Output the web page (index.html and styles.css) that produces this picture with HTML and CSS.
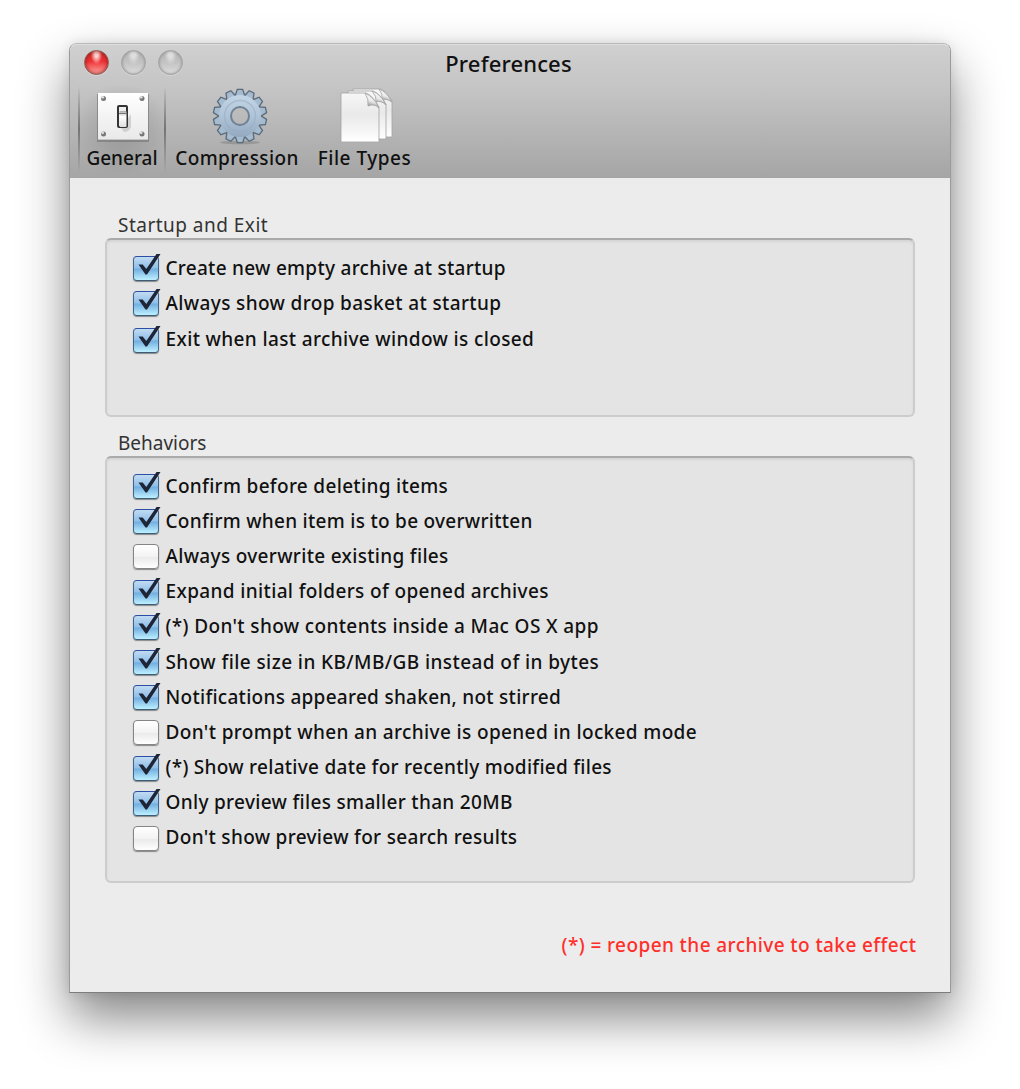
FILE: index.html
```html
<!DOCTYPE html>
<html lang="en">
<head>
<meta charset="utf-8">
<title>Preferences</title>
<link rel="stylesheet" href="styles.css">
</head>
<body>
<main class="window">
  <header class="chrome">
    <div class="titlebar">
      <div class="lights"><i class="light close"></i><i class="light"></i><i class="light"></i></div>
      <h1>Preferences</h1>
    </div>
    <nav class="toolbar">
      <div class="tab general selected">
        <svg width="56" height="54" viewBox="0 0 56 54">
          <defs>
            <linearGradient id="plate" x2="0" y2="1"><stop stop-color="#fff"/><stop offset="1" stop-color="#e9e9e9"/></linearGradient>
            <linearGradient id="lever" x2="0" y2="1"><stop stop-color="#aaa"/><stop offset=".35" stop-color="#fff"/><stop offset="1" stop-color="#ddd"/></linearGradient>
          </defs>
          <rect x="2" y="5" width="52" height="48" fill="#777" opacity=".65"/>
          <rect x="3" y="4" width="50" height="46" fill="url(#plate)"/>
          <path d="M3 50.500H53" stroke="#c5c5c5"/>
          <g fill="#777"><circle cx="8.500" cy="9.500" r="2.500"/><circle cx="47" cy="9.500" r="2.500"/><circle cx="8.500" cy="45" r="2.500"/><circle cx="47" cy="45" r="2.500"/></g>
          <g fill="#ddd"><circle cx="7.700" cy="8.300" r="1.400"/><circle cx="46.200" cy="8.300" r="1.400"/><circle cx="7.700" cy="43.800" r="1.400"/><circle cx="46.200" cy="43.800" r="1.400"/></g>
          <path d="M26 39l10-14v13q-2 5-7 5z" fill="#aaa" opacity=".45"/>
          <rect x="23" y="17" width="9" height="21" rx="1" fill="#eee" stroke="#333" stroke-width="2"/>
          <rect x="24.500" y="22" width="7" height="16" rx="1" fill="url(#lever)"/>
          <path d="M24 24.500H31" stroke="#777"/>
        </svg>
        <span>General</span>
      </div>
      <div class="tab compression">
        <svg width="60" height="58" viewBox="-30 -29 60 58">
          <defs>
            <linearGradient id="steel" gradientUnits="userSpaceOnUse" x1="0" y1="-27" x2="0" y2="27"><stop stop-color="#c8dbea"/><stop offset=".5" stop-color="#b0c4d7"/><stop offset="1" stop-color="#8ba2b8"/></linearGradient>
            <path id="tooth" d="M-4.200-20L-2.200-26H2.200L4.200-20z"/>
            <g id="gear"><circle r="20.500"/>
              <use href="#tooth"/><use href="#tooth" transform="rotate(25.714)"/><use href="#tooth" transform="rotate(51.429)"/><use href="#tooth" transform="rotate(77.143)"/><use href="#tooth" transform="rotate(102.857)"/><use href="#tooth" transform="rotate(128.571)"/><use href="#tooth" transform="rotate(154.286)"/><use href="#tooth" transform="rotate(180)"/><use href="#tooth" transform="rotate(205.714)"/><use href="#tooth" transform="rotate(231.429)"/><use href="#tooth" transform="rotate(257.143)"/><use href="#tooth" transform="rotate(282.857)"/><use href="#tooth" transform="rotate(308.571)"/><use href="#tooth" transform="rotate(334.286)"/>
            </g>
            <mask id="hub"><rect x="-30" y="-30" width="60" height="60" fill="#fff"/><circle r="8.500" fill="#000"/></mask>
          </defs>
          <ellipse cy="26.500" rx="20" ry="1.800" fill="#777" opacity=".45"/>
          <g mask="url(#hub)">
            <use href="#gear" fill="#596a7b" stroke="#596a7b" stroke-width="2.600"/>
            <use href="#gear" fill="#a5bbcf"/>
            <circle r="21" fill="url(#steel)"/>
            <circle r="15.500" fill="none" stroke="#98aec4" stroke-width="1.500" opacity=".6"/>
          </g>
          <circle r="9" fill="none" stroke="#6f8295" stroke-width="2"/>
        </svg>
        <span>Compression</span>
      </div>
      <div class="tab files">
        <svg width="58" height="58" viewBox="0 0 58 58">
          <defs><linearGradient id="paper" x2="0" y2="1"><stop stop-color="#f7f7f7"/><stop offset=".45" stop-color="#e9e9e9"/><stop offset="1" stop-color="#fff"/></linearGradient>
          <linearGradient id="curl" x1=".6" y1="0" x2=".3" y2="1"><stop stop-color="#fff"/><stop offset=".55" stop-color="#e8e8e8"/><stop offset="1" stop-color="#777"/></linearGradient></defs>
          <g fill="url(#paper)" stroke="#a2a2a2" stroke-width=".8">
            <path d="M15 2H42Q47 3 54 14V50H15z"/><path d="M41 2Q45 7 44 13Q49 11 54 15Q49 5 41 2" fill="url(#curl)"/>
            <path d="M10 4H35Q41 6 48 17V52H10z"/><path d="M34 4Q39 9 38 15Q43 13 48 18Q43 7 34 4" fill="url(#curl)"/>
            <path d="M3 6H28Q34 8 41 20V55H3z"/><path d="M27 6Q31 12 30 19Q36 16 41 21Q36 10 27 6" fill="url(#curl)"/>
          </g>
        </svg>
        <span>File Types</span>
      </div>
    </nav>
  </header>
  <section class="content">
    <svg class="defs" width="0" height="0">
      <symbol id="check" viewBox="0 0 28 30"><path d="M5.500 12.500H9.700L13.300 17L23.500 2H27.500L14 22.500H12.500z" fill="#1d2536"/></symbol>
    </svg>
    <h2 class="wide">Startup and Exit</h2>
    <div class="group startup">
      <div class="row"><i class="box on"><svg><use href="#check"/></svg></i><span class="tight">Create new empty archive at startup</span></div>
      <div class="row"><i class="box on"><svg><use href="#check"/></svg></i><span class="loose">Always show drop basket at startup</span></div>
      <div class="row last"><i class="box on"><svg><use href="#check"/></svg></i><span class="loose">Exit when last archive window is closed</span></div>
    </div>
    <h2>Behaviors</h2>
    <div class="group behaviors">
      <div class="row"><i class="box on"><svg><use href="#check"/></svg></i><span>Confirm before deleting items</span></div>
      <div class="row"><i class="box on"><svg><use href="#check"/></svg></i><span class="tight">Confirm when item is to be overwritten</span></div>
      <div class="row"><i class="box"></i><span>Always overwrite existing files</span></div>
      <div class="row"><i class="box on"><svg><use href="#check"/></svg></i><span class="loose">Expand initial folders of opened archives</span></div>
      <div class="row"><i class="box on"><svg><use href="#check"/></svg></i><span class="loose">(*) Don't show contents inside a Mac OS X app</span></div>
      <div class="row"><i class="box on"><svg><use href="#check"/></svg></i><span class="looser">Show file size in KB/MB/GB instead of in bytes</span></div>
      <div class="row"><i class="box on"><svg><use href="#check"/></svg></i><span class="tight">Notifications appeared shaken, not stirred</span></div>
      <div class="row"><i class="box"></i><span class="loose">Don't prompt when an archive is opened in locked mode</span></div>
      <div class="row"><i class="box on"><svg><use href="#check"/></svg></i><span class="tight">(*) Show relative date for recently modified files</span></div>
      <div class="row"><i class="box on"><svg><use href="#check"/></svg></i><span>Only preview files smaller than 20MB</span></div>
      <div class="row"><i class="box"></i><span>Don't show preview for search results</span></div>
    </div>
    <p class="note">(*) = reopen the archive to take effect</p>
  </section>
</main>
</body>
</html>
```
FILE: styles.css
```css
* { box-sizing: border-box; }
html { background: #fff; }
body {
  margin: 0;
  height: 1089px;
  padding: 43px 69px 0;
  overflow: hidden;
  color: #111;
  font: 500 19px/24px "Noto Sans", "Open Sans", sans-serif;
}
.window {
  width: 882px;
  height: 950px;
  border: 1px solid #9b9b9b;
  border-top-color: #b9b9b9;
  border-bottom-color: #7d7d7d;
  border-radius: 8px 8px 0 0;
  background: #ececec;
  box-shadow: 0 25px 50px rgba(0, 0, 0, .48), 0 0 12px rgba(0, 0, 0, .1);
}
.chrome {
  height: 134px;
  border-radius: 7px 7px 0 0;
  background: linear-gradient(#d0d0d0, #c5c5c5 32%, #a5a5a5);
  box-shadow: inset 0 1px #dedede;
}
.titlebar {
  display: grid;
  grid-template-columns: 1fr auto 1fr;
  height: 42px;
  padding-left: 14px;
  padding-right: 17px;
}
.lights { display: flex; gap: 12px; padding-top: 6px; }
.light {
  width: 25px;
  height: 25px;
  border-radius: 50%;
  border: 1px solid #a2a2a2;
  background: radial-gradient(ellipse at 50% 15%, #dedede 0 12%, transparent 38%), linear-gradient(#b5b5b5, #c3c3c3 50%, #dcdcdc);
  box-shadow: 0 1px #d5d5d5, inset 0 0 3px #8a8a8a;
}
.close {
  border-color: #8e5a50;
  background: radial-gradient(ellipse at 50% 14%, #ffd5d0 0 10%, transparent 36%), linear-gradient(#cf2a2d, #ee3236 45%, #ffaaa4);
  box-shadow: 0 1px #d5d5d5, inset 0 0 4px #8c1715;
}
h1 { margin: 6px 0 0; font-size: 22px; line-height: 26px; font-weight: 500; letter-spacing: .15px; white-space: nowrap; }
.toolbar { display: flex; padding-left: 8px; height: 91px; }
.tab { display: flex; flex-direction: column; align-items: center; height: 87px; white-space: nowrap; }
.tab svg { display: block; height: 60px; }
.tab span { line-height: 24px; }
.general { width: 88px; }
.general svg { margin-left: 2px; }
.compression { width: 142px; letter-spacing: .4px; }
.compression svg { margin-left: 6px; }
.files { width: 113px; letter-spacing: .5px; }
.files svg { margin-left: 4px; }
.selected {
  background:
    linear-gradient(transparent, #747474 50%, transparent) left / 2px 100% no-repeat,
    linear-gradient(transparent, #747474 50%, transparent) right / 2px 100% no-repeat,
    radial-gradient(ellipse at center, rgba(90, 90, 90, .3), transparent 75%);
}
.content { padding: 34px 35px 0; }
.defs { display: block; }
h2 { margin: 0; padding-left: 13px; height: 26px; font-size: 19px; line-height: 26px; font-weight: 400; color: #333; }
.group {
  border: 2px solid #ccc;
  border-top-color: #aaa;
  border-radius: 6px;
  background: #e4e4e4;
  box-shadow: inset 0 2px 2px #d5d5d5;
  padding: 10px 26px;
}
.startup { height: 179px; margin-bottom: 13px; }
.behaviors { height: 427px; }
.row { display: flex; align-items: center; gap: 7px; height: 35.200px; letter-spacing: .32px; white-space: nowrap; }
.last { margin-top: 1.500px; }
.tight { letter-spacing: .28px; }
.loose { letter-spacing: .365px; }
.looser { letter-spacing: .42px; }
.wide { letter-spacing: .48px; }
.box {
  position: relative;
  width: 26px;
  height: 25px;
  margin-top: 2px;
  border: 1.500px solid #858585;
  border-radius: 4px;
  background: linear-gradient(#fff, #f3f3f3 50%, #eaeaea 55%, #fff);
  box-shadow: 0 1px 1px #888;
}
.on { border-color: #2c4fa3 #41658d #3c5c78; background: linear-gradient(#c2dbf2, #8fbfe9 48%, #72aee0 52%, #bdf0ff); }
.row span { margin-left: -.5px; }
.box svg { position: absolute; left: -1px; top: -5px; width: 28px; height: 30px; overflow: visible; }
.note { margin: 49px -1.500px 0 0; text-align: right; color: #ff2f2a; line-height: 26px; letter-spacing: .41px; }
```
